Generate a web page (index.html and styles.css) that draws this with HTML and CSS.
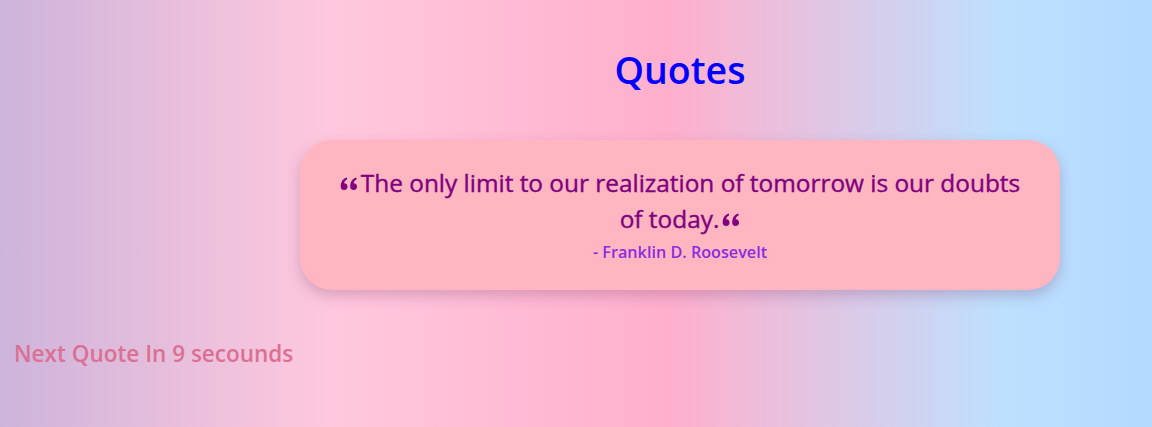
FILE: index.html
```html
<!DOCTYPE html>
<html lang="en">
<head>
<meta charset="utf-8">
<title>Quotes</title>
<link rel="stylesheet" href="styles.css">
</head>
<body>
  <div class="page">
    <main class="main">
      <h1 class="title">Quotes</h1>
      <section class="card">
        <p class="quote"><svg class="qicon" viewBox="0 0 18 14" aria-hidden="true"><path d="M7.5 9.6a3.4 3.4 0 1 1-6.8 0C0.7 5 2.6 1.6 7 0.4v2.2C5.2 3.4 4.3 4.6 4.2 6.2A3.4 3.4 0 0 1 7.5 9.6z"/><path d="M17 9.6a3.4 3.4 0 1 1-6.8 0c0-4.6 1.9-8 6.3-9.2v2.2c-1.8 0.8-2.7 2-2.8 3.6A3.4 3.4 0 0 1 17 9.6z"/></svg>The only limit to our realization of tomorrow is our doubts of today.<svg class="qicon qend" viewBox="0 0 18 14" aria-hidden="true"><path d="M7.5 9.6a3.4 3.4 0 1 1-6.8 0C0.7 5 2.6 1.6 7 0.4v2.2C5.2 3.4 4.3 4.6 4.2 6.2A3.4 3.4 0 0 1 7.5 9.6z"/><path d="M17 9.6a3.4 3.4 0 1 1-6.8 0c0-4.6 1.9-8 6.3-9.2v2.2c-1.8 0.8-2.7 2-2.8 3.6A3.4 3.4 0 0 1 17 9.6z"/></svg></p>
        <p class="author">- Franklin D. Roosevelt</p>
      </section>
    </main>
    <p class="timer">Next Quote In 9 secounds</p>
  </div>
</body>
</html>
```

FILE: styles.css
```css
html, body {
  margin: 0;
  padding: 0;
  height: 100%;
}
body {
  font-family: "Open Sans", "Noto Sans", sans-serif;
  background: linear-gradient(to right, #cdb4db 0%, #ffc8dd 29%, #ffafcc 58%, #bde0fe 87%, #b3d9ff 100%);
}
.page {
  min-height: 100%;
  display: flex;
  flex-direction: column;
}
.main {
  padding-left: 208px;
  display: flex;
  flex-direction: column;
  align-items: center;
}
.title {
  margin: 46px 0 0;
  font-size: 37.5px;
  line-height: 48px;
  font-weight: 600;
  color: #0000ff;
}
.card {
  margin-top: 46px;
  width: 760px;
  height: 150px;
  box-sizing: border-box;
  padding: 25px 36px 0;
  background: #ffb6c1;
  border-radius: 32px;
  box-shadow: 0 6px 14px rgba(120, 60, 110, 0.28);
  text-align: center;
}
.quote {
  margin: 0;
  font-size: 24.4px;
  line-height: 36px;
  color: #800080;
  font-weight: 400;
  -webkit-text-stroke: 0.4px #800080;
}
.qicon {
  width: 18px;
  height: 14px;
  fill: #800080;
  margin-right: 3px;
  vertical-align: 1px;
}
.qend {
  margin-left: 3px;
  margin-right: 0;
}
.author {
  margin: 3px 0 0;
  font-size: 16.2px;
  line-height: 24px;
  font-weight: 600;
  color: #8a2be2;
}
.timer {
  margin: 49px 0 0 14px;
  font-size: 22.5px;
  line-height: 30px;
  font-weight: 600;
  color: #db7093;
}
```
